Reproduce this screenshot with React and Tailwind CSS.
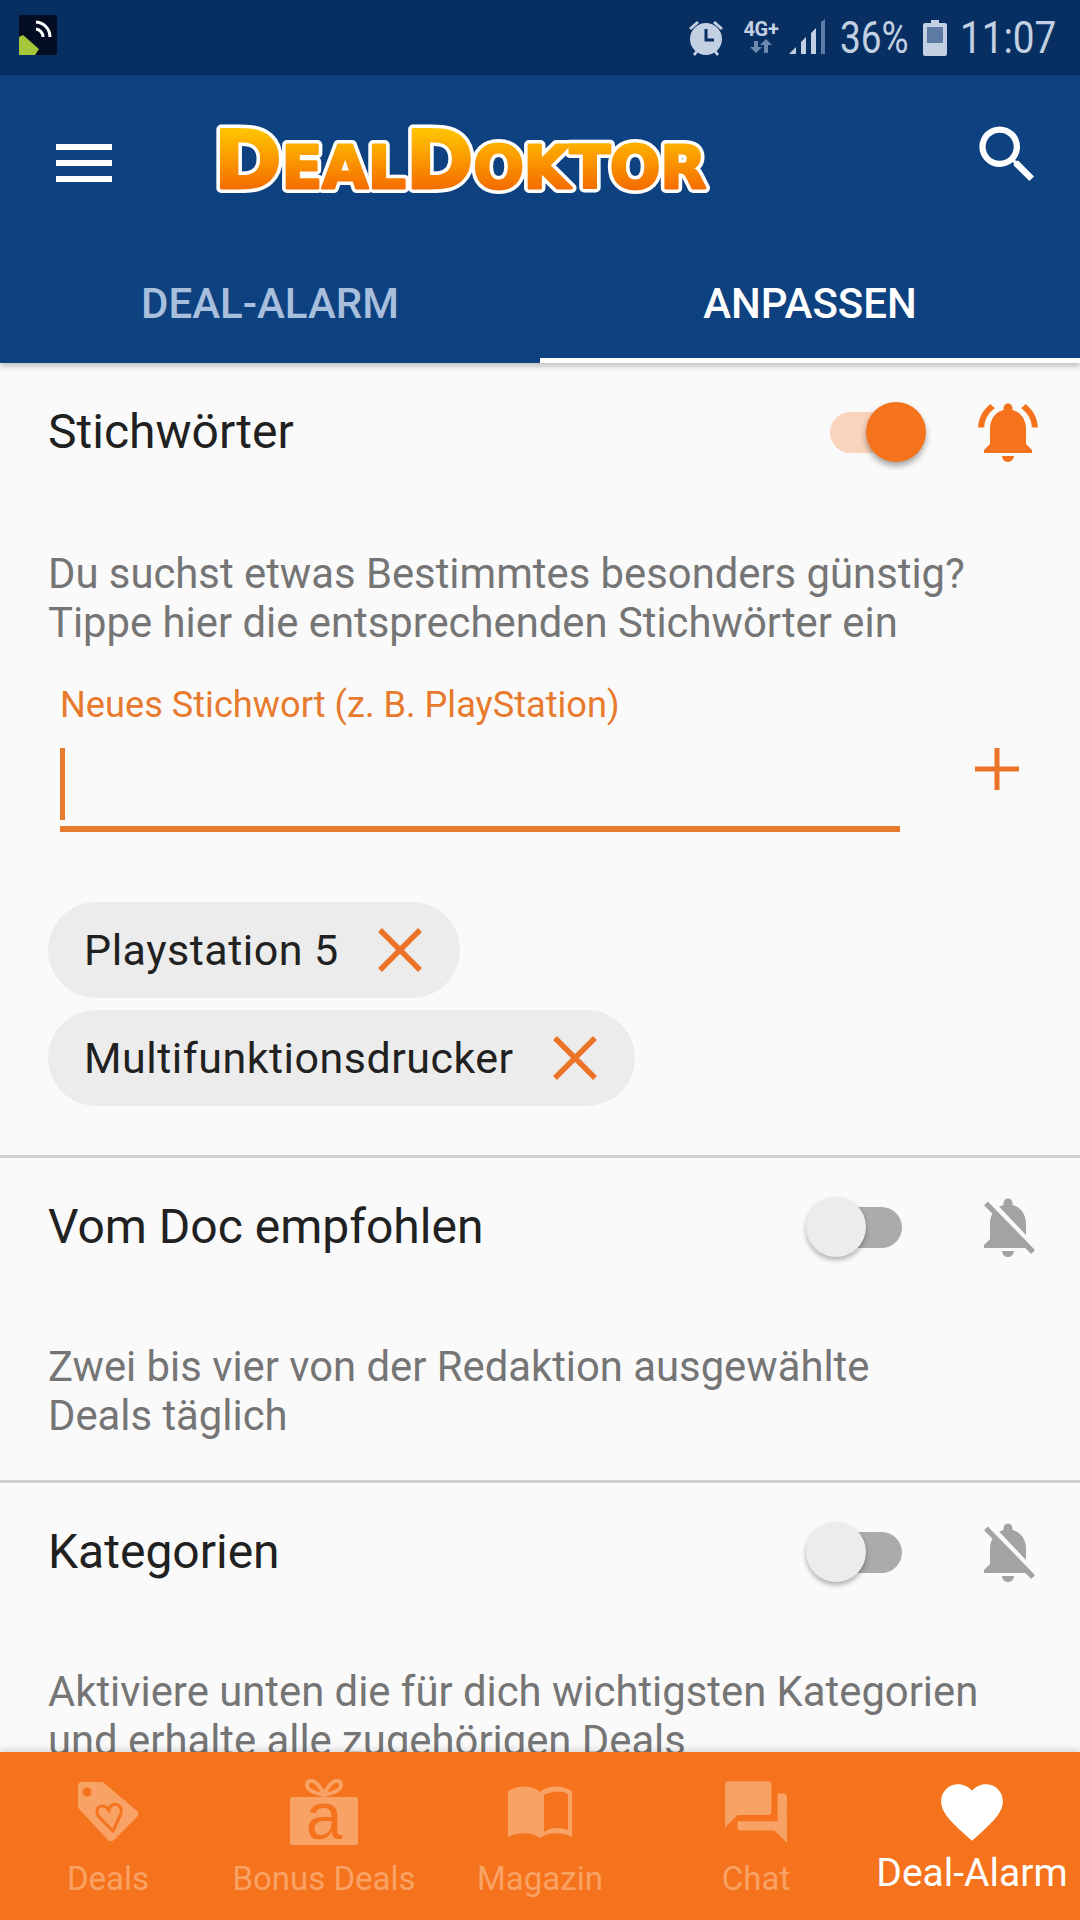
import { MdForum, MdFavorite, MdSearch, MdNotificationsActive, MdNotificationsOff } from "react-icons/md";

const FONT = "font-['Roboto',sans-serif]";

function StatusBar() {
  return (
    <div className="h-[75px] bg-[#072f61] flex items-center justify-between pl-[19px] pr-[25px] text-[#c3d0e2] shrink-0">
      <svg width="38" height="40" viewBox="0 0 38 40" className="mb-[5px]">
        <rect width="38" height="40" rx="2" fill="#020d22" />
        <path d="M17 14a8 8 0 0 1 7 8M17 7a15 15 0 0 1 14 15" fill="none" stroke="#fff" strokeWidth="3" />
        <path d="M0 22l4-2 16 14-4 6H0z" fill="#a4c639" />
      </svg>
      <div className="flex items-center">
        <svg width="38" height="38" viewBox="0 0 38 38" className="mr-[17px]">
          <path d="M2 9l8-7 2 2-8 7zM36 9l-8-7-2 2 8 7zM6 35l4-5 2 2-4 5zM32 35l-4-5-2 2 4 5z" fill="#c3d0e2" />
          <circle cx="19" cy="20" r="16" fill="#c3d0e2" />
          <path d="M19 10v11h8" fill="none" stroke="#072f61" strokeWidth="3" />
        </svg>
        <div className="w-[38px] h-[38px] flex flex-col items-center mr-[9px]">
          <span className="font-['Roboto',sans-serif] font-bold text-[20px] leading-[20px] tracking-[-0.3px] whitespace-nowrap">4G+</span>
          <svg width="24" height="14" viewBox="0 0 24 14">
            <path d="M7 14L1 8h4V2h4v6h4zM17 0l6 6h-4v8h-4V6h-4z" fill="#6d89ad" />
          </svg>
        </div>
        <svg width="37" height="37" viewBox="0 0 37 37" className="mr-[14px]">
          <path d="M0 35l7-7v7z" fill="#c3d0e2" />
          <path d="M12 35V23l5-5v17zM22 35V14l5-5v26z" fill="#c3d0e2" />
          <path d="M32 35V3l4-3v35z" fill="#5d7ba3" />
        </svg>
        <span className="font-['Roboto',sans-serif] font-normal text-[45px] leading-none w-[70px] whitespace-nowrap scale-x-[0.82] origin-left">36%</span>
        <svg width="24" height="36" viewBox="0 0 24 36" className="ml-[13px] mr-[13px]">
          <path d="M8 0h8v3h6a2 2 0 0 1 2 2v29a2 2 0 0 1-2 2H2a2 2 0 0 1-2-2V5a2 2 0 0 1 2-2h6z" fill="#c3d0e2" />
          <rect x="4" y="7" width="16" height="16" fill="#5c7aa3" />
        </svg>
        <span className="font-['Roboto',sans-serif] font-normal text-[45px] leading-none w-[95px] whitespace-nowrap scale-x-[0.86] origin-left">11:07</span>
      </div>
    </div>
  );
}

function LogoText({ stroke, strokeWidth, fill }) {
  return (
    <text
      x="10"
      y="85"
      textLength="492"
      lengthAdjust="spacingAndGlyphs"
      fontFamily="DejaVu Sans"
      fontWeight="bold"
      fill={fill}
      stroke={stroke}
      strokeWidth={strokeWidth}
      strokeLinejoin="round"
    >
      <tspan fontSize="80">D</tspan>
      <tspan fontSize="58">EAL</tspan>
      <tspan fontSize="80">D</tspan>
      <tspan fontSize="58">OKTOR</tspan>
    </text>
  );
}

function Logo() {
  return (
    <svg width="520" height="110" viewBox="0 0 520 110">
      <defs>
        <linearGradient id="logoFill" gradientUnits="userSpaceOnUse" x1="0" y1="24" x2="0" y2="88">
          <stop offset="0" stopColor="#ffc800" />
          <stop offset="1" stopColor="#f56a00" />
        </linearGradient>
      </defs>
      <LogoText stroke="#ffffff" strokeWidth="10" fill="#ffffff" />
      <LogoText stroke="url(#logoFill)" strokeWidth="3" fill="url(#logoFill)" />
    </svg>
  );
}

function Header() {
  return (
    <header className="bg-[#0e4180] shrink-0 relative z-10 shadow-[0_3px_6px_rgba(0,0,0,0.25)]">
      <div className="h-[175px] flex items-center pl-[56px] pr-[35px]">
        <div className="w-[56px] flex flex-col gap-[10px]">
          <div className="h-[6px] bg-white" />
          <div className="h-[6px] bg-white" />
          <div className="h-[6px] bg-white" />
        </div>
        <div className="ml-[92px] mt-[-10px]">
          <Logo />
        </div>
        <MdSearch size={75} color="#fff" className="ml-auto mt-[-16px]" />
      </div>
      <div className="h-[113px] flex">
        <div className="w-1/2 flex items-start justify-center pt-[28px]">
          <span className={`${FONT} font-medium text-[42px] leading-[52px] text-[#a7bfdd]`}>DEAL-ALARM</span>
        </div>
        <div className="w-1/2 flex items-start justify-center pt-[28px] border-b-[5px] border-white">
          <span className={`${FONT} font-medium text-[42px] leading-[52px] text-white`}>ANPASSEN</span>
        </div>
      </div>
    </header>
  );
}

function Toggle({ on }) {
  if (on) {
    return (
      <div className="relative w-[96px] h-[60px] flex items-center">
        <div className="w-[72px] h-[41px] rounded-full bg-[#f9d3bb]" />
        <div className="absolute right-0 top-0 w-[60px] h-[60px] rounded-full bg-[#f5731d] shadow-[0_4px_6px_rgba(0,0,0,0.35)]" />
      </div>
    );
  }
  return (
    <div className="relative w-[96px] h-[60px] flex items-center justify-end">
      <div className="w-[72px] h-[41px] rounded-full bg-[#ababab]" />
      <div className="absolute left-0 top-0 w-[60px] h-[60px] rounded-full bg-[#ececec] shadow-[0_3px_5px_rgba(0,0,0,0.3)]" />
    </div>
  );
}

function SectionHead({ title, on }) {
  return (
    <div className="h-[138px] flex items-center">
      <h2 className={`${FONT} text-[48px] leading-none text-[#212121]`}>{title}</h2>
      <div className={`ml-auto ${on ? "mr-[106px]" : "mr-[130px]"}`}>
        <Toggle on={on} />
      </div>
      <div className="absolute right-[36px]">
        {on ? <MdNotificationsActive size={72} color="#f5731d" /> : <MdNotificationsOff size={72} color="#a3a3a3" />}
      </div>
    </div>
  );
}

function Chip({ label }) {
  return (
    <div className="h-[96px] rounded-full bg-[#ececec] flex items-center pl-[36px] pr-[38px]">
      <span className={`${FONT} text-[43px] text-[#212121] tracking-[0.5px]`}>{label}</span>
      <svg width="44" height="44" viewBox="0 0 44 44" className="ml-[39px]">
        <path d="M2 2l40 40M42 2L2 42" stroke="#ec7428" strokeWidth="5.5" fill="none" />
      </svg>
    </div>
  );
}

const descClass = `${FONT} text-[41.8px] leading-[49px] text-[#757575]`;

function Content() {
  return (
    <main className="flex-1 overflow-hidden bg-[#fafafa]">
      <section className="relative px-[48px] pb-[49px] border-b-[3px] border-[#cfcfcf]">
        <SectionHead title="Stichwörter" on />
        <p className={`${descClass} mt-[48px]`}>
          Du suchst etwas Bestimmtes besonders günstig?
          <br />
          Tippe hier die entsprechenden Stichwörter ein
        </p>
        <div className="ml-[12px] mt-[37px]">
          <div className={`${FONT} text-[36.2px] leading-[42px] text-[#e87a2e]`}>Neues Stichwort (z. B. PlayStation)</div>
          <div className="flex items-start">
            <div className="w-[840px] h-[106px] pt-[22px] border-b-[6px] border-[#e87a2e]">
              <div className="w-[5px] h-[72px] bg-[#e87a2e]" />
            </div>
            <svg width="44" height="42" viewBox="0 0 44 42" className="ml-[75px] mt-[22px]">
              <path d="M22 0v42M0 21h44" stroke="#ec7428" strokeWidth="5" fill="none" />
            </svg>
          </div>
        </div>
        <div className="mt-[70px] flex flex-col items-start gap-[12px]">
          <Chip label="Playstation 5" />
          <Chip label="Multifunktionsdrucker" />
        </div>
      </section>
      <section className="relative px-[48px] pb-[40px] border-b-[3px] border-[#cfcfcf]">
        <SectionHead title="Vom Doc empfohlen" />
        <p className={`${descClass} mt-[46px]`}>
          Zwei bis vier von der Redaktion ausgewählte
          <br />
          Deals täglich
        </p>
      </section>
      <section className="relative px-[48px]">
        <SectionHead title="Kategorien" />
        <p className={`${descClass} mt-[46px]`}>
          Aktiviere unten die für dich wichtigsten Kategorien
          <br />
          und erhalte alle zugehörigen Deals
        </p>
      </section>
    </main>
  );
}

const NAV_LIGHT = "#f9a265";
const NAV_BG = "#f5731d";

function TagIcon() {
  return (
    <svg width="62" height="62" viewBox="0 0 62 62">
      <path d="M5 1h19a4 4 0 0 1 3 1l33 28a4 4 0 0 1 0 6L37 59a4 4 0 0 1-6 0L2 28a4 4 0 0 1-1-3V5a4 4 0 0 1 4-4z" fill={NAV_LIGHT} />
      <circle cx="10" cy="11" r="4.5" fill={NAV_BG} />
      <path d="M36 50L23 37c-4-4-4-9-1-11s7-1 10 3c1-5 5-7 9-5s4 7 2 11z" fill={NAV_LIGHT} stroke={NAV_BG} strokeWidth="3" />
    </svg>
  );
}

function GiftIcon() {
  return (
    <svg width="68" height="66" viewBox="0 0 68 66">
      <path d="M34 16C30 6 24 1 20 2s-4 6 0 9 9 4 14 5zm0 0c4-10 10-15 14-14s4 6 0 9-9 4-14 5z" fill="none" stroke={NAV_LIGHT} strokeWidth="4" />
      <rect x="0" y="18" width="68" height="48" rx="2" fill={NAV_LIGHT} />
      <text x="34" y="60" textAnchor="middle" fontFamily="Liberation Sans" fontSize="66" fill={NAV_BG}>a</text>
    </svg>
  );
}

function BookIcon() {
  return (
    <svg width="68" height="52" viewBox="0 0 68 52">
      <path d="M2 5c10-6 24-6 32 1 8-7 22-7 32-1v46c-10-5-24-5-32 1-8-6-22-6-32-1z" fill={NAV_LIGHT} />
      <path d="M38 9c7-4 18-5 24-1v36c-8-3-17-3-24 2z" fill={NAV_BG} />
    </svg>
  );
}

function NavItem({ icon, label, active }) {
  return (
    <div className="flex flex-col items-center">
      <div className="h-[72px] flex items-center justify-center">{icon}</div>
      <span className={`${FONT} leading-[38px] whitespace-nowrap ${active ? "text-[39px] text-white mt-[6px]" : "text-[33px] text-[#f9a265] mt-[12px]"}`}>
        {label}
      </span>
    </div>
  );
}

function BottomNav() {
  return (
    <nav className="h-[168px] bg-[#f5731d] shrink-0 grid grid-cols-5 pt-[24px] relative z-10 shadow-[0_-3px_6px_rgba(0,0,0,0.12)]">
      <NavItem icon={<TagIcon />} label="Deals" />
      <NavItem icon={<GiftIcon />} label="Bonus Deals" />
      <NavItem icon={<BookIcon />} label="Magazin" />
      <NavItem icon={<MdForum size={74} color={NAV_LIGHT} />} label="Chat" />
      <NavItem icon={<MdFavorite size={74} color="#fff" />} label="Deal-Alarm" active />
    </nav>
  );
}

export default function App() {
  return (
    <div className="w-[1080px] h-[1920px] flex flex-col overflow-hidden">
      <StatusBar />
      <Header />
      <Content />
      <BottomNav />
    </div>
  );
}
